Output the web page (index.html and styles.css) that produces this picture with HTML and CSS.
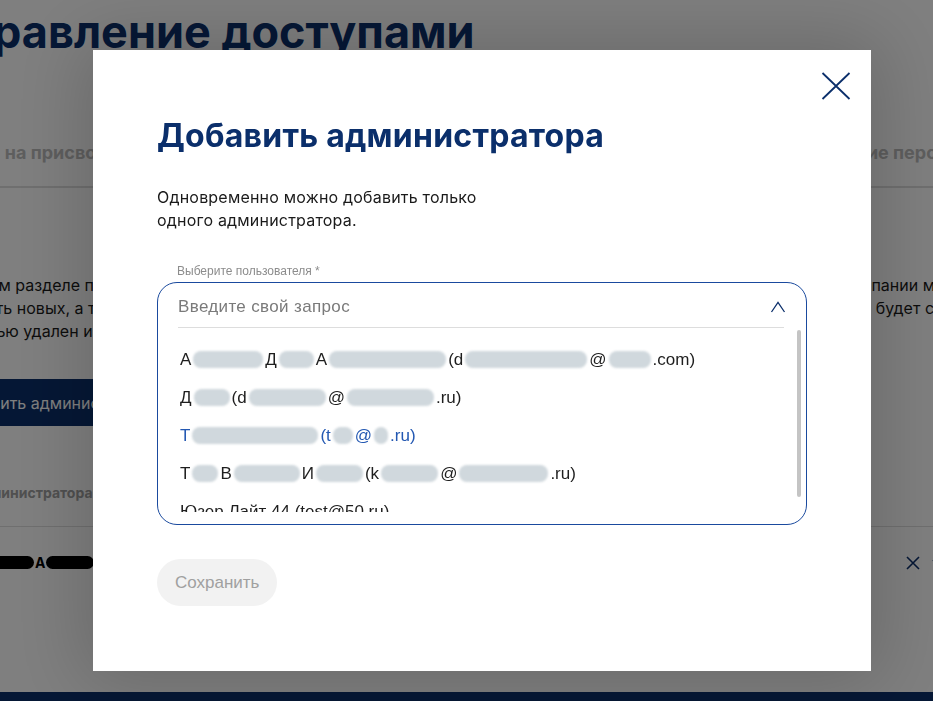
FILE: index.html
```html
<!DOCTYPE html>
<html>
<head>
    <title>Управление доступами</title>
    <link rel="stylesheet" href="styles.css">
</head>
<body>
    <div class="page">
        <h1 class="page-title">Управление доступами</h1>
        <div class="tabs">
            <span class="tab">Заявки на присвоение ролей</span>
            <span class="tab">Управление персоналом</span>
        </div>
        <div class="intro">
            <div class="intro-line"><span>В данном разделе представлены все</span><span>администраторы вашей компании может быть</span></div>
            <div class="intro-line"><span>Добавить новых, а также удалить действующих.</span><span>Удаленный пользователь будет снят с роли</span></div>
            <div class="intro-last">Он с ролью удален из списка администраторов.</div>
        </div>
        <button class="btn-primary">Добавить администратора</button>
        <div class="table">
            <div class="table-head">ФИО администратора</div>
            <div class="table-row">
                <span class="marker marker-a"></span><span class="row-name">А</span><span class="marker marker-b"></span>
                <span class="row-actions">
                    <svg width="14" height="14" viewBox="0 0 14 14"><path d="M1 1L13 13M13 1L1 13" stroke="#0b2f6b" stroke-width="1.6" fill="none"/></svg>
                    <svg width="14" height="14" viewBox="0 0 14 14"><path d="M1 4L7 11L13 4" stroke="#0b2f6b" stroke-width="1.6" fill="none"/></svg>
                </span>
            </div>
        </div>
    </div>
    <div class="footer"></div>

    <div class="overlay">
        <div class="modal">
            <button class="modal-close">
                <svg width="30" height="28" viewBox="0 0 30 28"><path d="M1.5 1L28.5 27M28.5 1L1.5 27" stroke="#0b2f6b" stroke-width="1.8" fill="none"/></svg>
            </button>
            <h2 class="modal-title">Добавить администратора</h2>
            <p class="modal-text">Одновременно можно добавить только одного администратора.</p>

            <div class="field-label">Выберите пользователя *</div>
            <div class="select">
                <div class="select-input">
                    <span class="placeholder">Введите свой запрос</span>
                    <svg width="16" height="12" viewBox="0 0 16 12"><path d="M1.5 11L8 1.5L14.5 11" stroke="#0b2f6b" stroke-width="1.3" fill="none"/></svg>
                </div>
                <div class="options-area">
                    <div class="options">
                        <div class="option">А<span class="blur" style="width:70px"></span>Д<span class="blur" style="width:35px"></span>А<span class="blur" style="width:117px"></span>(d<span class="blur" style="width:122px"></span>@<span class="blur" style="width:42px"></span>.com)</div>
                        <div class="option">Д<span class="blur" style="width:36px"></span>(d<span class="blur" style="width:77px"></span>@<span class="blur" style="width:87px"></span>.ru)</div>
                        <div class="option option-active">Т<span class="blur" style="width:126px"></span>(t<span class="blur" style="width:20px"></span>@<span class="blur" style="width:14px"></span>.ru)</div>
                        <div class="option">Т<span class="blur" style="width:26px"></span>В<span class="blur" style="width:66px"></span>И<span class="blur" style="width:47px"></span>(k<span class="blur" style="width:57px"></span>@<span class="blur" style="width:89px"></span>.ru)</div>
                        <div class="option">Юзер Лайт 44 (test@50.ru)</div>
                    </div>
                    <div class="scrollbar"><div class="scrollbar-thumb"></div></div>
                </div>
            </div>

            <button class="btn-save" disabled>Сохранить</button>
        </div>
    </div>
</body>
</html>
```

FILE: styles.css
```css
html, body {
    overflow: hidden;
}
body {
    margin: 0;
    font-family: Inter, "Noto Sans", sans-serif;
    color: #1a1a1a;
    background-color: #ffffff;
}

/* page under the modal */
.page {
    margin-left: -64px;
    width: 1080px;
    height: 692px;
}
.page-title {
    margin: 0;
    padding-top: 4px;
    font-size: 45px;
    line-height: 56px;
    font-weight: 700;
    color: #0b2f6b;
}
.tabs {
    display: flex;
    justify-content: space-between;
    margin-top: 80px;
    padding-right: 10px;
    padding-bottom: 20px;
    border-bottom: 2px solid #dedede;
    font-size: 18px;
    line-height: 26px;
    font-weight: 700;
    color: #bcbcbc;
}
.intro {
    margin-top: 86px;
    font-size: 16px;
    line-height: 23px;
    white-space: nowrap;
}
.intro-line {
    display: flex;
    justify-content: space-between;
}
.intro-last {
    text-indent: -8px;
}
.btn-primary {
    margin-top: 36px;
    height: 47px;
    padding: 0 14px;
    border: 0;
    background-color: #0b2f6b;
    color: #ffffff;
    font-family: inherit;
    font-size: 16px;
}
.table {
    margin-top: 58px;
}
.table-head {
    padding-bottom: 25px;
    border-bottom: 1px solid #dedede;
    font-size: 14px;
    font-weight: 700;
    color: #a0a0a0;
}
.table-row {
    display: flex;
    align-items: center;
    padding-top: 27px;
    font-size: 14px;
    font-weight: 700;
    color: #000000;
}
.marker {
    display: inline-block;
    height: 13px;
    border-radius: 7px;
    background-color: #000000;
}
.marker-a {
    width: 98px;
}
.marker-b {
    width: 48px;
}
.row-name {
    margin: 0 1px;
}
.row-actions {
    display: flex;
    gap: 12px;
    margin-left: auto;
    margin-right: 70px;
}
.footer {
    height: 20px;
    background-color: #0b2f6b;
}

/* modal */
.overlay {
    position: fixed;
    inset: 0;
    background-color: rgba(0, 0, 0, 0.5);
    padding: 50px 62px 30px 93px;
}
.modal {
    position: relative;
    box-sizing: border-box;
    width: 778px;
    height: 621px;
    padding: 66px 64px 0;
    background-color: #ffffff;
    box-shadow: 0 0 70px 10px rgba(0, 0, 0, 0.18);
}
.modal-close {
    position: absolute;
    top: 22px;
    right: 20px;
    padding: 0;
    border: 0;
    background: none;
    line-height: 0;
}
.modal-title {
    margin: 0;
    font-size: 32px;
    line-height: 40px;
    font-weight: 700;
    letter-spacing: 0.25px;
    color: #0b2f6b;
}
.modal-text {
    width: 345px;
    margin: 30px 0 0;
    font-size: 16px;
    line-height: 23px;
    letter-spacing: 0.2px;
}
.field-label {
    margin-top: 31px;
    padding-left: 20px;
    font-family: "Liberation Sans", Arial, sans-serif;
    font-size: 12px;
    line-height: 16px;
    color: #8c8c8c;
}
.select {
    margin-top: 3px;
    height: 243px;
    box-sizing: border-box;
    border: 1px solid #1a4a9e;
    border-radius: 20px;
    font-family: "Liberation Sans", Arial, sans-serif;
}
.select-input {
    display: flex;
    align-items: center;
    justify-content: space-between;
    margin: 0 22px 0 20px;
    padding: 14px 0 10px;
    border-bottom: 1px solid #dddddd;
}
.placeholder {
    font-size: 17px;
    line-height: 20px;
    letter-spacing: 0.35px;
    color: #7a7a7a;
}
.select-input svg {
    margin-right: -2px;
}
.options-area {
    display: flex;
    height: 184px;
}
.options {
    flex: 1;
    overflow: hidden;
    padding: 13px 0 0 22px;
}
.option {
    padding: 9px 0;
    font-size: 17px;
    line-height: 20px;
    color: #1e1e1e;
    white-space: nowrap;
}
.option-active {
    color: #2358b2;
}
.blur {
    display: inline-block;
    height: 17px;
    margin: 0 2px;
    vertical-align: -3px;
    border-radius: 8px;
    background-color: #d0d8dd;
    filter: blur(1.3px);
}
.scrollbar {
    width: 4px;
    margin-right: 5px;
    padding-top: 2px;
}
.scrollbar-thumb {
    height: 167px;
    border-radius: 2px;
    background-color: #c4c4c4;
}
.btn-save {
    margin-top: 34px;
    height: 47px;
    padding: 0 18px;
    border: 0;
    border-radius: 24px;
    background-color: #f2f2f2;
    color: #a0a0a0;
    font-family: "Liberation Sans", Arial, sans-serif;
    font-size: 17px;
}
```
